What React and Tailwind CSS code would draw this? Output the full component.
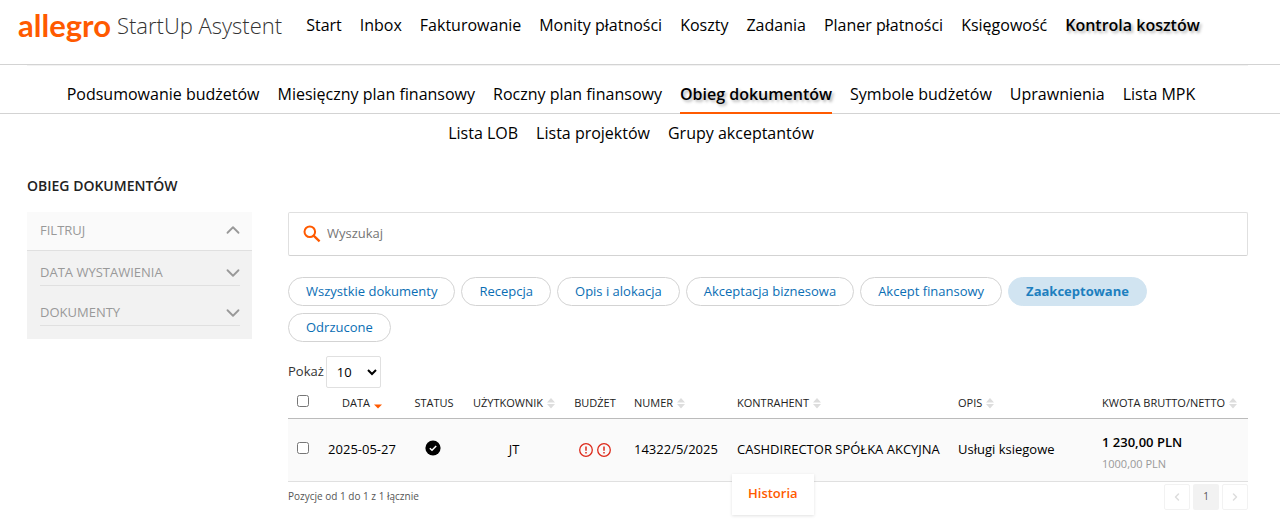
import { ChevronDown, ChevronLeft, ChevronRight, ChevronUp } from "lucide-react";
import clsx from "clsx";

const MAIN_NAV = [
  "Start",
  "Inbox",
  "Fakturowanie",
  "Monity płatności",
  "Koszty",
  "Zadania",
  "Planer płatności",
  "Księgowość",
  "Kontrola kosztów",
];

const SUB_NAV = [
  "Podsumowanie budżetów",
  "Miesięczny plan finansowy",
  "Roczny plan finansowy",
  "Obieg dokumentów",
  "Symbole budżetów",
  "Uprawnienia",
  "Lista MPK",
];

const SUB_NAV_MORE = ["Lista LOB", "Lista projektów", "Grupy akceptantów"];

const STAGES = [
  "Wszystkie dokumenty",
  "Recepcja",
  "Opis i alokacja",
  "Akceptacja biznesowa",
  "Akcept finansowy",
  "Zaakceptowane",
  "Odrzucone",
];

const COLUMNS = [
  { label: "DATA", width: "w-[88px]", sort: "desc", center: true },
  { label: "STATUS", width: "w-[56px]", center: true },
  { label: "UŻYTKOWNIK", width: "w-[104px]", sort: "none", center: true },
  { label: "BUDŻET", width: "w-[58px]", center: true },
  { label: "NUMER", width: "w-[103px]", sort: "none" },
  { label: "KONTRAHENT", width: "w-[221px]", sort: "none" },
  { label: "OPIS", width: "w-[144px]", sort: "none" },
  { label: "KWOTA BRUTTO/NETTO", width: "w-auto", sort: "none" },
];

const SearchIcon = () => (
  <svg width="18" height="18" viewBox="0 0 18 18" fill="none" stroke="#ff5a00" strokeWidth="2">
    <circle cx="6.8" cy="6.8" r="5.3" />
    <path d="M10.6 10.6 16.6 16.4" strokeWidth="2.3" />
  </svg>
);

const SortIcon = ({ sort }) => (
  <svg width="8" height="12" viewBox="0 0 8 12" className="shrink-0">
    {sort === "desc" ? (
      <path d="M0 7.5h8L4 11.5z" fill="#ff5a00" />
    ) : (
      <path d="M0 5.5 4 1l4 4.5zM0 7h8l-4 4.5z" fill="#dddddd" />
    )}
  </svg>
);

const AcceptedIcon = () => (
  <svg width="16" height="16" viewBox="0 0 16 16" className="mx-auto">
    <circle cx="8" cy="8" r="7.6" fill="#000" />
    <path d="M4.8 8.2 7 10.3 11.2 6" fill="none" stroke="#fff" strokeWidth="1.5" />
  </svg>
);

const AlertIcon = () => (
  <svg width="14" height="14" viewBox="0 0 14 14" fill="none" stroke="#dd2a1b">
    <circle cx="7" cy="7" r="6.3" strokeWidth="1.3" />
    <path d="M7 3.5v4.3M7 9v1.5" strokeWidth="1.5" />
  </svg>
);

const NavLink = ({ children, active, underline }) => (
  <a
    href="#"
    className={clsx(
      "block",
      active && "font-semibold [text-shadow:2px_2px_3px_rgba(0,0,0,0.3)]",
      underline && "-mb-px border-b-2 border-[#ff5a00] pb-[6px]"
    )}
  >
    {children}
  </a>
);

const FilterSection = ({ label }) => (
  <button type="button" className="flex h-6 w-full items-start justify-between border-b border-[#e0e0e0] text-left">
    {label}
    <ChevronDown size={22} className="-mr-1" />
  </button>
);

const Sidebar = () => (
  <aside className="w-[225px] shrink-0 self-start bg-[#f2f2f2] text-[13px] leading-5 text-[#999999]">
    <button
      type="button"
      className="flex h-[39px] w-full items-center justify-between border-b border-[#e0e0e0] bg-[#fafafa] pr-3 pb-[2px] pl-[13px] text-left"
    >
      FILTRUJ
      <ChevronUp size={22} className="-mr-1" />
    </button>
    <div className="flex flex-col gap-4 pt-[11px] pr-3 pb-[13px] pl-[13px]">
      <FilterSection label="DATA WYSTAWIENIA" />
      <FilterSection label="DOKUMENTY" />
    </div>
  </aside>
);

const DocumentsTable = () => (
  <table className="w-full table-fixed border-collapse text-[13px] text-black">
    <thead>
      <tr className="h-[30px] border-b border-[#bbbbbb] text-[11px] text-[#222222]">
        <th className="w-[30px] pb-[3px]">
          <input type="checkbox" aria-label="Zaznacz wszystkie" className="mx-auto block size-3" />
        </th>
        {COLUMNS.map(({ label, width, sort, center }) => (
          <th key={label} className={clsx("font-normal", width, !center && "pl-[10px]")}>
            <span className={clsx("flex items-center gap-1 whitespace-nowrap", center && "justify-center")}>
              {label}
              {sort && <SortIcon sort={sort} />}
            </span>
          </th>
        ))}
      </tr>
    </thead>
    <tbody>
      <tr className="h-[63px] border-b border-[#e0e0e0] bg-[#fafafa]">
        <td className="pb-[3px]">
          <input type="checkbox" aria-label="Zaznacz dokument" className="mx-auto block size-3" />
        </td>
        <td className="text-center">2025-05-27</td>
        <td className="pr-[3px] pb-[3px]">
          <AcceptedIcon />
        </td>
        <td className="text-center">JT</td>
        <td>
          <div className="flex justify-center gap-1">
            <AlertIcon />
            <AlertIcon />
          </div>
        </td>
        <td className="pl-[10px]">14322/5/2025</td>
        <td className="relative pl-[10px] whitespace-nowrap">
          CASHDIRECTOR SPÓŁKA AKCYJNA
          <button
            type="button"
            className="absolute top-[55px] left-[5px] h-[41px] bg-white px-4 font-semibold text-[#ff5a00] shadow-[0_1px_3px_rgba(0,0,0,0.12)]"
          >
            Historia
          </button>
        </td>
        <td className="pl-[10px]">Usługi ksiegowe</td>
        <td className="pt-[10px] pl-[10px]">
          <div className="font-semibold">1 230,00 PLN</div>
          <div className="text-[11px] leading-6 text-[#999999]">1000,00 PLN</div>
        </td>
      </tr>
    </tbody>
  </table>
);

const Pagination = () => (
  <div className="flex gap-[3px] text-[10px] text-[#dddddd]">
    <button type="button" aria-label="Poprzednia" className="flex size-[26px] items-center justify-center rounded-xs border border-[#f2f2f2]">
      <ChevronLeft size={12} strokeWidth={3} />
    </button>
    <button type="button" className="size-[26px] rounded-xs bg-[#f2f2f2] text-[#555555]">
      1
    </button>
    <button type="button" aria-label="Następna" className="flex size-[26px] items-center justify-center rounded-xs border border-[#f2f2f2]">
      <ChevronRight size={12} strokeWidth={3} />
    </button>
  </div>
);

export default function App() {
  return (
    <div className="bg-white font-['Open_Sans',sans-serif] text-black">
      <header className="flex h-[65px] border-b border-[#d3d3d3] pl-[18px]">
        <a href="#" className="flex h-[50px] items-center gap-[6px] whitespace-nowrap">
          <span className="font-['Lato',sans-serif] text-[31px] leading-[46px] font-bold text-[#ff5a00]">allegro</span>
          <span className="text-[22px] font-light text-[#333333]">StartUp Asystent</span>
        </a>
        <nav className="flex h-[50px] items-center gap-[18px] pl-6 whitespace-nowrap">
          {MAIN_NAV.map((item) => (
            <NavLink key={item} active={item === "Kontrola kosztów"}>
              {item}
            </NavLink>
          ))}
        </nav>
      </header>

      <nav className="whitespace-nowrap">
        <div className="mr-8 ml-[27px] h-px bg-[#f2f2f2]" />
        <ul className="flex justify-center border-b border-[#d3d3d3] pt-4">
          {SUB_NAV.map((item) => (
            <li key={item} className="mr-[18px] h-[31px]">
              <NavLink active={item === "Obieg dokumentów"} underline={item === "Obieg dokumentów"}>
                {item}
              </NavLink>
            </li>
          ))}
        </ul>
        <ul className="flex justify-center pt-[7px]">
          {SUB_NAV_MORE.map((item) => (
            <li key={item} className="mr-[18px]">
              <NavLink>{item}</NavLink>
            </li>
          ))}
        </ul>
      </nav>

      <main className="pt-[31px] pr-8 pb-[10px] pl-[27px]">
        <h1 className="text-sm font-semibold text-[#222222]">OBIEG DOKUMENTÓW</h1>
        <div className="mt-4 flex gap-9">
          <Sidebar />
          <section className="min-w-0 flex-1">
            <label className="flex h-11 items-center gap-[6px] rounded-xs border border-[#e0e0e0] border-b-[#d3d3d3] pl-[14px]">
              <SearchIcon />
              <input
                type="text"
                placeholder="Wyszukaj"
                aria-label="Wyszukaj"
                className="flex-1 text-[13px] outline-none placeholder:text-[#757575]"
              />
            </label>

            <div className="mt-[21px] flex flex-wrap gap-x-[6px] gap-y-[7px]">
              {STAGES.map((stage) => (
                <button
                  key={stage}
                  type="button"
                  className={clsx(
                    "h-[29px] rounded-full border px-[17px] text-[13px]",
                    stage === "Zaakceptowane"
                      ? "border-[#d1e4f1] bg-[#d1e4f1] font-bold text-[#1d7fbf]"
                      : "border-[#d3d3d3] text-[#0a6eb4]"
                  )}
                >
                  {stage}
                </button>
              ))}
            </div>

            <label className="mt-[14px] flex items-center gap-[2px] text-[13px] text-[#333333]">
              Pokaż
              <select className="h-8 w-[55px] rounded-xs border border-[#e0e0e0] bg-white pl-[6px] text-[13px] text-black">
                <option>10</option>
                <option>25</option>
                <option>50</option>
              </select>
            </label>

            <DocumentsTable />

            <div className="flex items-start justify-between pt-[2px]">
              <p className="pt-1 text-[10px] leading-4 text-[#555555]">Pozycje od 1 do 1 z 1 łącznie</p>
              <Pagination />
            </div>
          </section>
        </div>
      </main>
    </div>
  );
}
